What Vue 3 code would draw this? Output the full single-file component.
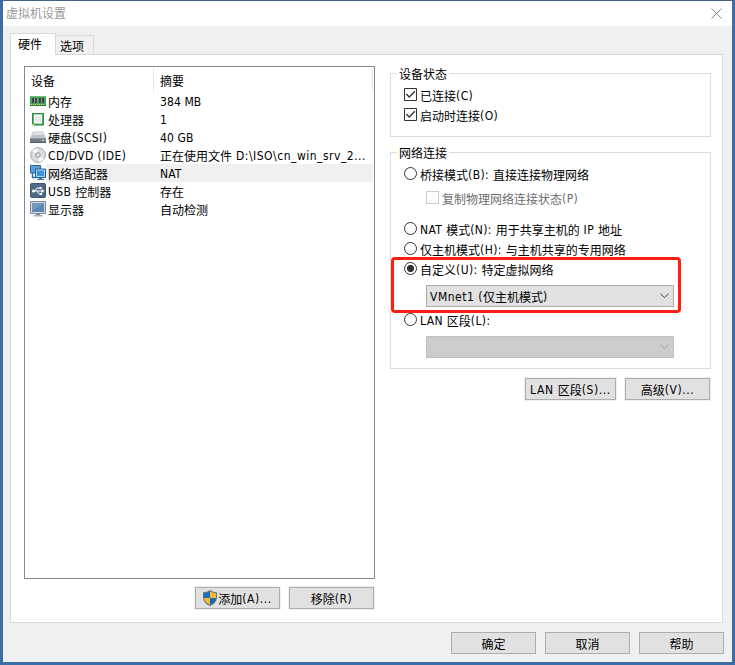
<script setup>
import { h } from 'vue'

const devices = [
  { icon: 'memory', name: '内存', summary: '384 MB' },
  { icon: 'cpu', name: '处理器', summary: '1' },
  { icon: 'disk', name: '硬盘(SCSI)', summary: '40 GB' },
  { icon: 'cd', name: 'CD/DVD (IDE)', summary: '正在使用文件 D:\\ISO\\cn_win_srv_2...' },
  { icon: 'net', name: '网络适配器', summary: 'NAT', selected: true },
  { icon: 'usb', name: 'USB 控制器', summary: '存在' },
  { icon: 'display', name: '显示器', summary: '自动检测' },
]

// Splits a caption into Latin and Chinese runs so each can be spaced on its own.
const Txt = (props) =>
  h('span', { class: 'txt' },
    props.t.match(/[\u3400-\u9fff]+|[^\u3400-\u9fff]+/g).map((run) =>
      h('span', { class: /[\u3400-\u9fff]/.test(run) ? 'zh' : 'en' }, run)))
Txt.props = ['t']
</script>

<template>
  <div class="window">
    <header class="title">
      <Txt t="虚拟机设置" />
      <svg class="close" width="11" height="11" viewBox="0 0 11 11"><path d="M.5.5l10 10M10.5.5l-10 10" stroke="#8c8c8c" fill="none" /></svg>
    </header>

    <nav class="tabs">
      <div class="tab active"><Txt t="硬件" /></div>
      <div class="tab"><Txt t="选项" /></div>
    </nav>

    <main class="panel">
      <section class="left">
        <div class="list">
          <div class="head"><div class="c1"><Txt t="设备" /></div><div class="c2"><Txt t="摘要" /></div></div>
          <div v-for="d in devices" :key="d.name" class="row">
            <svg class="icon" width="16" height="16" viewBox="0 0 16 16">
              <g v-if="d.icon === 'memory'">
                <path d="M0 3h16v10H0z" fill="#3fa653" /><path d="M0 3h16v1H0z" fill="#6cc077" />
                <path d="M2 5h2v5H2zM5 5h2v5H5zM9 5h2v5H9zM12 5h2v5h-2z" fill="#3b4140" />
                <path d="M4 5h1v5H4zM7 5h1v5H7zM11 5h1v5h-1z" fill="#8b9a94" />
                <path d="M1 11.5h14" stroke="#e1d36b" stroke-dasharray="1 1" /><path d="M0 12h4v1H0zM5 12h11v1H5z" fill="#227b38" />
              </g>
              <g v-else-if="d.icon === 'cpu'">
                <path d="M2 2h12v12.500H2z" fill="#2c9148" /><path d="M3 3h10v10H3z" fill="#5bb070" />
                <path d="M4 3.500h8v9H4z" fill="#fff" /><path d="M5 5h6v6H5z" fill="#e8ebe9" />
                <path d="M2 13h2v1.500H2z" fill="#d9df73" />
              </g>
              <g v-else-if="d.icon === 'disk'">
                <path d="M3 2.500h10l3 7H0z" fill="#bcc3cb" /><path d="M3.600 3h8.800l1.200 3H2.400z" fill="#dde1e5" />
                <path d="M0 9h16v5H0z" fill="#737b83" /><path d="M0 9h16v1H0z" fill="#929ba3" /><path d="M0 13h16v1H0z" fill="#535c65" />
                <path d="M12 11h2v1h-2z" fill="#c6f4a5" />
              </g>
              <g v-else-if="d.icon === 'cd'">
                <circle cx="8" cy="8" r="7.4" fill="#dadfe4" stroke="#a3aab2" />
                <path d="M8 8L2.2 4A7 7 0 0 1 7 1zM8 8l6 4a7 7 0 0 1-5 3z" fill="#f7f8f9" />
                <circle cx="8" cy="8" r="2.4" fill="#bcc4cc" stroke="#8b949c" stroke-width=".7" /><circle cx="8" cy="8" r="1" fill="#fff" />
              </g>
              <g v-else-if="d.icon === 'net'">
                <path d="M.5.5h10v7.500H.5z" fill="#5d9fd6" stroke="#2469a3" />
                <path d="M2.500 8v4.500H6" fill="none" stroke="#2370ac" stroke-width="1.400" />
                <path d="M5.500 4h10v8.500h-10z" fill="#3f92d6" stroke="#175c96" /><path d="M6.500 5h8v6.500h-8z" fill="none" stroke="#a5d8f5" />
                <path d="M9 13h3v1h2v1H7v-1h2z" fill="#3a75a8" />
              </g>
              <g v-else-if="d.icon === 'usb'">
                <rect x=".5" y=".5" width="15" height="14" rx="1" fill="#506b89" stroke="#3e5773" />
                <path d="M3 8h9M5 8l2-3h3M7 8l2 3h2" fill="none" stroke="#fff" />
                <circle cx="3.5" cy="8" r="1.5" fill="#fff" /><path d="M11.5 6l3 2-3 2zM9.5 4h2v2h-2zM10 10h2v2h-2z" fill="#fff" />
              </g>
              <g v-else>
                <path d="M.5.5h15v12H.5z" fill="#d6dde5" stroke="#7a8796" /><path d="M2 2h12v9H2z" fill="#5d87b3" />
                <path d="M2 2h12L2 10z" fill="#7499c0" /><path d="M6 13h4v1H6z" fill="#7b8999" /><path d="M3.500 14h9v1.500h-9z" fill="#a4adb8" />
              </g>
            </svg>
            <div class="cells" :class="{ selected: d.selected }">
              <div class="name"><Txt :t="d.name" /></div><div class="summary" :class="{ path: d.icon === 'cd' }"><Txt :t="d.summary" /></div>
            </div>
          </div>
        </div>
        <div class="actions">
          <button class="btn halo">
            <svg class="shield" width="14" height="16" viewBox="0 0 14 16">
              <path d="M7 0c2 1.6 4.3 2.2 7 2.2V7c0 4.3-2.8 7.3-7 9-4.2-1.700-7-4.700-7-9V2.200C2.700 2.200 5 1.600 7 0z" fill="#65747c" />
              <path d="M7 1.300V8H1V3.200c2.300-.1 4.300-.7 6-1.900z" fill="#1b6ec2" /><path d="M7 1.300c1.700 1.200 3.700 1.800 6 1.900V8H7z" fill="#fdb92d" />
              <path d="M1 8h6v6.800C3.600 13.300 1.400 11.200 1 8z" fill="#fdb92d" /><path d="M7 8h6c-.4 3.200-2.600 5.300-6 6.800z" fill="#1665b8" />
            </svg><Txt t="添加(A)..." />
          </button>
          <button class="btn halo"><Txt t="移除(R)" /></button>
        </div>
      </section>

      <section class="right">
        <div class="group status">
          <div class="legend"><Txt t="设备状态" /></div>
          <label v-for="s in ['已连接(C)', '启动时连接(O)']" :key="s" class="opt">
            <svg width="13" height="13" viewBox="0 0 13 13"><path d="M.5.5h12v12H.5z" fill="#fff" stroke="#333" /><path d="M2.300 6l2.900 3 5.700-5.800" fill="none" stroke="#333" stroke-width="1.300" /></svg>
            <Txt :t="s" />
          </label>
        </div>

        <div class="group network">
          <div class="legend"><Txt t="网络连接" /></div>
          <label class="opt"><i class="radio"></i><Txt t="桥接模式(B): 直接连接物理网络" /></label>
          <label class="opt sub"><i class="box"></i><Txt t="复制物理网络连接状态(P)" /></label>
          <label class="opt nat"><i class="radio"></i><Txt t="NAT 模式(N): 用于共享主机的 IP 地址" /></label>
          <label class="opt"><i class="radio"></i><Txt t="仅主机模式(H): 与主机共享的专用网络" /></label>
          <label class="opt"><i class="radio on"></i><Txt t="自定义(U): 特定虚拟网络" /></label>
          <div class="combo">
            <Txt t="VMnet1 (仅主机模式)" />
            <svg width="9" height="6" viewBox="0 0 9 6"><path d="M.5.7l4 4 4-4" fill="none" stroke="#444" /></svg>
          </div>
          <label class="opt lan"><i class="radio"></i><Txt t="LAN 区段(L):" /></label>
          <div class="combo off">
            <span></span>
            <svg width="9" height="6" viewBox="0 0 9 6"><path d="M.5.7l4 4 4-4" fill="none" stroke="#a0a0a0" /></svg>
          </div>
          <div class="mark"></div>
        </div>

        <div class="more">
          <button class="btn halo wide"><Txt t="LAN 区段(S)..." /></button>
          <button class="btn halo"><Txt t="高级(V)..." /></button>
        </div>
      </section>
    </main>

    <footer class="footer">
      <button class="btn"><Txt t="确定" /></button>
      <button class="btn"><Txt t="取消" /></button>
      <button class="btn"><Txt t="帮助" /></button>
    </footer>
  </div>
</template>

<style>
body { margin: 0; overflow: hidden; }
.txt { white-space: pre; position: relative; top: 1px; }
.txt .en { letter-spacing: .4px; }
.txt .zh { position: relative; top: 1px; }
.tabs .zh, .title .zh, .head .zh { top: 0; }
.summary .en { letter-spacing: .1px; }
.path .en { letter-spacing: .5px; }
.combo .en { letter-spacing: .5px; }
.nat .en { letter-spacing: .4px; }
.btn .en { letter-spacing: .6px; }
</style>

<style scoped>
.window, .btn { font-family: "DejaVu Sans Condensed", "Noto Sans CJK SC", sans-serif; font-size: 12px; line-height: 14px; color: #000; }
.window { box-sizing: border-box; width: 735px; height: 665px; background: #f0f0f0; border: 3px solid #3c6ea5; border-top: 1px solid #446389; display: flex; flex-direction: column; }
.title { height: 25px; background: #fff; color: #999; display: flex; align-items: center; justify-content: space-between; padding: 0 10px 0 3px; flex: none; }
.title .txt { top: 0; }
.tabs { display: flex; align-items: flex-end; height: 28px; padding-left: 7px; flex: none; }
.tab { box-sizing: border-box; width: 38px; height: 19px; border: 1px solid #d9d9d9; border-left: 0; border-bottom: 0; padding: 3px 0 0 4px; }
.tab.active { width: 46px; height: 22px; border-left: 1px solid #d9d9d9; background: #fff; padding: 3px 0 0 7px; margin-bottom: -1px; position: relative; z-index: 1; }
.panel { box-sizing: border-box; margin-left: 7px; width: 713px; height: 569px; background: #fff; border: 1px solid #d9d9d9; padding: 11px 0 0 13px; display: flex; gap: 15px; flex: none; }
.left { width: 351px; }
.list { box-sizing: border-box; height: 513px; border: 1px solid #828790; background: #fff; }
.head { display: flex; height: 25px; }
.head > div { box-sizing: border-box; height: 24px; margin-top: 1px; padding: 6px 0 0 6px; border-right: 1px solid #e5e5e5; }
.c1 { width: 129px; }
.c2 { width: 219px; }
.row { display: flex; align-items: center; height: 18px; padding-left: 5px; }
.icon { display: block; flex: none; }
.cells { display: flex; align-items: center; height: 18px; width: 327px; padding-left: 2px; box-sizing: border-box; }
.cells.selected { background: #f0f0f0; }
.name { width: 112px; }
.actions { display: flex; justify-content: flex-end; gap: 9px; padding: 8px 1px 0 0; }
.btn { box-sizing: border-box; width: 85px; height: 22px; margin: 0; padding: 0; background: #e1e1e1; border: 1px solid #adadad; display: flex; align-items: center; justify-content: center; }
.halo { box-shadow: 0 0 0 1px #f0f0f0; }
.wide { width: 91px; }
.shield { margin-right: 1px; }
.right { width: 321px; padding-top: 7px; }
.group { box-sizing: border-box; width: 321px; border: 1px solid #dcdcdc; position: relative; padding-left: 13px; }
.legend { position: absolute; top: -8px; left: 6px; padding: 0 2px; background: #fff; }
.status { height: 64px; padding-top: 14px; }
.network { height: 217px; margin-top: 15px; padding-top: 14px; }
.opt { display: flex; align-items: center; gap: 3px; height: 13px; margin-bottom: 7px; }
.radio { box-sizing: border-box; width: 13px; height: 13px; border: 1px solid #333; border-radius: 50%; background: #fff; }
.radio.on { background: radial-gradient(circle, #333 3.3px, #fff 3.9px); }
.sub { margin: 11px 0 18px 22px; color: #6d6d6d; }
.box { box-sizing: border-box; width: 13px; height: 13px; border: 1px solid #ccc; background: #fff; }
.combo { box-sizing: border-box; width: 248px; height: 22px; margin: 10px 0 0 22px; border: 1px solid #adadad; background: #e1e1e1; display: flex; align-items: center; justify-content: space-between; padding: 0 4px 0 3px; }
.off { background: #ccc; border-color: #bfbfbf; }
.lan { margin: 6px 0 0; }
.mark { position: absolute; left: 0; top: 104px; box-sizing: border-box; width: 290px; height: 56px; border: 3px solid #ff1e14; border-radius: 4px; }
.more { display: flex; justify-content: flex-end; gap: 9px; padding: 9px 1px 0 0; }
.footer { display: flex; justify-content: flex-end; gap: 9px; padding: 9px 8px 0 0; }
</style>
